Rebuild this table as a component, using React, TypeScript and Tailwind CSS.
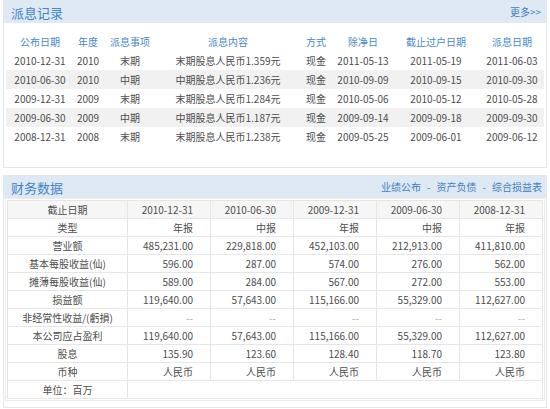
import React from "react";

const divRows = [
  ["2010-12-31", "2010", "末期", "末期股息人民币1.359元", "现金", "2011-05-13", "2011-05-19", "2011-06-03"],
  ["2010-06-30", "2010", "中期", "中期股息人民币1.236元", "现金", "2010-09-09", "2010-09-15", "2010-09-30"],
  ["2009-12-31", "2009", "末期", "末期股息人民币1.284元", "现金", "2010-05-06", "2010-05-12", "2010-05-28"],
  ["2009-06-30", "2009", "中期", "中期股息人民币1.187元", "现金", "2009-09-14", "2009-09-18", "2009-09-30"],
  ["2008-12-31", "2008", "末期", "末期股息人民币1.238元", "现金", "2009-05-25", "2009-06-01", "2009-06-12"],
];

const divHead = ["公布日期", "年度", "派息事项", "派息内容", "方式", "除净日", "截止过户日期", "派息日期"];

const finRows: [string, string[]][] = [
  ["类型", ["年报", "中报", "年报", "中报", "年报"]],
  ["营业额", ["485,231.00", "229,818.00", "452,103.00", "212,913.00", "411,810.00"]],
  ["基本每股收益(仙)", ["596.00", "287.00", "574.00", "276.00", "562.00"]],
  ["摊薄每股收益(仙)", ["589.00", "284.00", "567.00", "272.00", "553.00"]],
  ["损益额", ["119,640.00", "57,643.00", "115,166.00", "55,329.00", "112,627.00"]],
  ["非经常性收益/(虧損)", ["--", "--", "--", "--", "--"]],
  ["本公司应占盈利", ["119,640.00", "57,643.00", "115,166.00", "55,329.00", "112,627.00"]],
  ["股息", ["135.90", "123.60", "128.40", "118.70", "123.80"]],
  ["币种", ["人民币", "人民币", "人民币", "人民币", "人民币"]],
];

const dates = ["2010-12-31", "2010-06-30", "2009-12-31", "2009-06-30", "2008-12-31"];

const gridCols = "grid grid-cols-[68px_28px_56px_140px_36px_58px_88px_64px]";

export default function App() {
  return (
    <div className="w-[550px] h-[409px] overflow-hidden bg-white px-[3px] font-['Noto_Sans_CJK_SC',sans-serif] text-[10px] text-[#4d4d4d]">
      {/* Panel 1 */}
      <div className="h-[168px] border border-[#e2e8ef]">
        <div className="flex h-[22px] items-center justify-between bg-[#dfe9f4] pl-[7px] pr-[5px]">
          <span className="text-[13px] leading-none text-[#3f84c6]">派息记录</span>
          <span className="text-[10px] leading-none text-[#3f7fc0]">更多&gt;&gt;</span>
        </div>
        <div className="mx-[2px] mt-[9px]">
          <div className={`${gridCols} h-[19px] items-center text-center text-[#4a88c6]`}>
            {divHead.map((h) => (
              <div key={h}>{h}</div>
            ))}
          </div>
          {divRows.map((r, i) => (
            <div
              key={i}
              className={`${gridCols} h-[19px] items-center text-center ${i % 2 === 1 ? "bg-[#f1f1f1]" : ""}`}
            >
              {r.map((c, j) => (
                <div key={j} className="whitespace-nowrap">
                  {c}
                </div>
              ))}
            </div>
          ))}
        </div>
      </div>

      {/* Panel 2 */}
      <div className="mt-[7px] h-[233px] border border-[#e2e8ef]">
        <div className="flex h-[22px] items-center justify-between bg-[#dfe9f4] pl-[7px] pr-[4px]">
          <span className="text-[13px] leading-none text-[#3f84c6]">财务数据</span>
          <span className="flex gap-[6px] text-[10px] leading-none text-[#3f7fc0]">
            <span>业绩公布</span>
            <span>-</span>
            <span>资产负债</span>
            <span>-</span>
            <span>综合损益表</span>
          </span>
        </div>
        <div className="mx-[1px] border border-[#ececec] p-[1px]">
          <table className="w-full table-fixed border-collapse">
            <colgroup>
              <col className="w-[120px]" />
              <col />
              <col />
              <col />
              <col />
              <col />
            </colgroup>
            <tbody>
              <tr className="h-[18px] bg-[#f6f6f6]">
                <td className="border border-[#e6e6e6] text-center">截止日期</td>
                {dates.map((d) => (
                  <td key={d} className="border border-[#e6e6e6] pr-[17px] text-right">
                    {d}
                  </td>
                ))}
              </tr>
              {finRows.map(([label, vals]) => (
                <tr key={label} className="h-[18px]">
                  <td className="border border-[#e6e6e6] text-center whitespace-nowrap">{label}</td>
                  {vals.map((v, k) => (
                    <td
                      key={k}
                      className={`border border-[#e6e6e6] pr-[17px] text-right ${v === "--" ? "text-[#aaa]" : ""}`}
                    >
                      {v}
                    </td>
                  ))}
                </tr>
              ))}
              <tr className="h-[18px]">
                <td className="border border-[#e6e6e6] text-center">单位：百万</td>
                <td colSpan={5} className="border border-[#e6e6e6]"></td>
              </tr>
            </tbody>
          </table>
        </div>
      </div>
    </div>
  );
}
